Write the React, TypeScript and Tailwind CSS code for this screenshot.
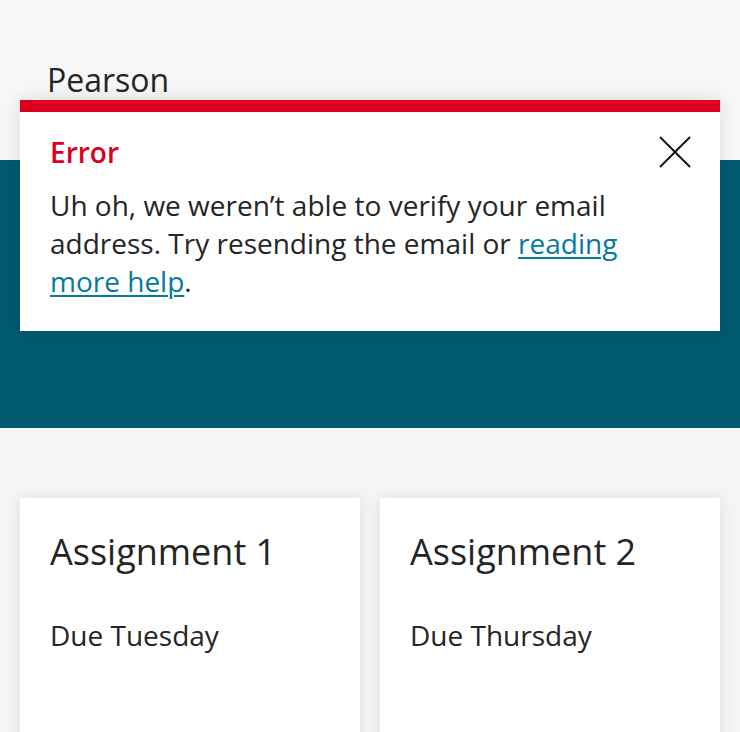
const font = { fontFamily: '"Open Sans", "Liberation Sans", sans-serif' };

function Card({ title, due }: { title: string; due: string }) {
  return (
    <div className="h-[260px] bg-white px-[30px] pt-[30px] shadow-[0_0_14px_rgba(0,0,0,0.1)]">
      <h2 className="text-[36px] leading-[48px] text-[#252525]">{title}</h2>
      <p className="mt-[39px] text-[28px] leading-[40px] text-[#252525]">{due}</p>
    </div>
  );
}

function ErrorAlert() {
  return (
    <div className="absolute inset-x-[20px] top-[100px] z-10 flex flex-col bg-white shadow-[0_0_18px_rgba(0,0,0,0.12)]">
      <div className="h-[12px] shrink-0 bg-[#db0020]" />
      <div className="relative px-[30px] pb-[31px] pt-[22px]">
        <button className="absolute right-[29px] top-[24px] text-[#111]" aria-label="Close">
          <svg width="32" height="32" viewBox="0 0 32 32" fill="none" stroke="currentColor" strokeWidth="2">
            <path d="M1 1 L31 31 M31 1 L1 31" />
          </svg>
        </button>
        <h3 className="text-[28px] font-semibold leading-[36px] text-[#db0020]">Error</h3>
        <p className="mt-[16px] pr-[60px] text-[28px] leading-[38px] text-[#252525]">
          Uh oh, we weren’t able to verify your email address. Try resending the email or{" "}
          <a href="#" className="text-[#047a9c] underline decoration-2 underline-offset-[3px]">
            reading more help
          </a>
          .
        </p>
      </div>
    </div>
  );
}

export default function App() {
  return (
    <div className="min-h-[732px] overflow-hidden bg-[#f5f5f5]" style={font}>
      <div className="relative">
        {/* header */}
        <header className="h-[160px] bg-[#f7f7f7] pl-[47px] pt-[60px]">
          <span className="text-[32px] leading-[40px] text-[#252525]">Pearson</span>
        </header>

        {/* teal band */}
        <section className="h-[268px] bg-[#005a70]" />

        <ErrorAlert />
      </div>

      {/* cards */}
      <main className="grid grid-cols-2 gap-[20px] px-[20px] pt-[70px]">
        <Card title="Assignment 1" due="Due Tuesday" />
        <Card title="Assignment 2" due="Due Thursday" />
      </main>
    </div>
  );
}
